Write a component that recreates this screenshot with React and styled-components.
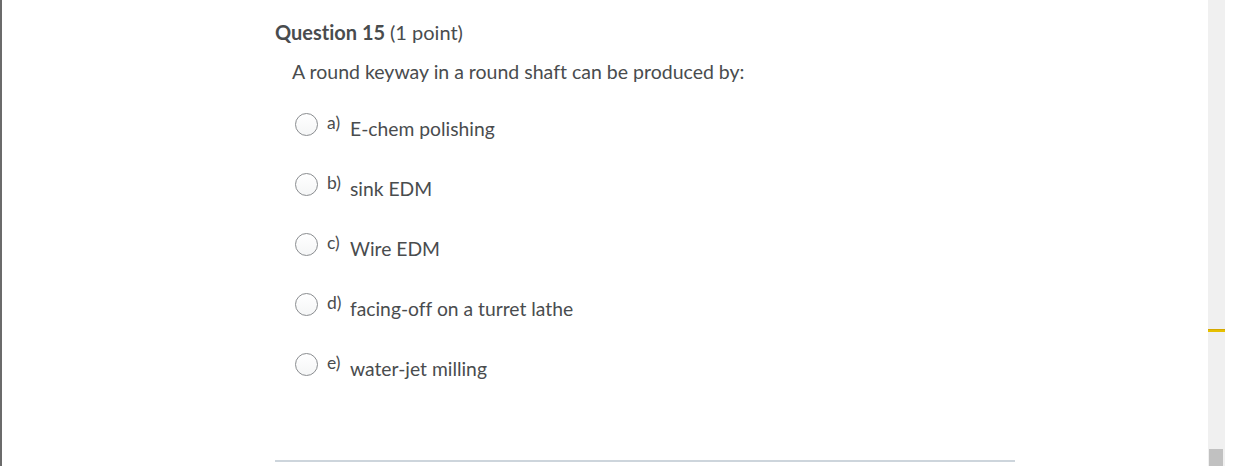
import React from 'react'
import styled, { createGlobalStyle } from 'styled-components'

const Global = createGlobalStyle`
  html, body {
    margin: 0;
    padding: 0;
    background: #fff;
    font-family: Lato, "Noto Sans", sans-serif;
    font-variant-ligatures: none;
    color: #494c4e;
  }
`

const Page = styled.div`
  display: flex;
  height: 466px;
  overflow: hidden;
`

const Main = styled.div`
  flex: 1;
  border-left: 2px solid #6b6b6b;
  padding-left: 273px;
  display: flex;
  flex-direction: column;
`

const Question = styled.div`
  width: 740px;
  flex: 1;
  display: flex;
  flex-direction: column;
  border-bottom: 2px solid #cdd5dc;
  margin-bottom: 4px;
`

const Title = styled.h2`
  margin: 20px 0 0;
  font-size: 20px;
  font-weight: 700;
  line-height: 24px;
  span {
    font-weight: 400;
  }
`

const Prompt = styled.p`
  margin: 16px 0 0 17px;
  font-size: 19.5px;
  line-height: 24px;
`

const Options = styled.ul`
  list-style: none;
  margin: 28px 0 0 20px;
  padding: 0;
  display: flex;
  flex-direction: column;
  gap: 36px;
`

const Option = styled.li`
  display: flex;
  align-items: flex-start;
  height: 24px;
`

const Radio = styled.span`
  width: 23px;
  height: 23px;
  box-sizing: border-box;
  border-radius: 50%;
  border: 1px solid #8a8d90;
  background: linear-gradient(#ffffff, #f4f5f6);
  margin-top: 1px;
  flex: none;
`

const Letter = styled.span`
  margin-left: 9px;
  font-size: 17.5px;
  line-height: 20px;
  margin-top: 1px;
  width: 23px;
`

const Text = styled.span`
  font-size: 19.3px;
  line-height: 20px;
  margin-top: 7px;
`

const Track = styled.div`
  width: 17px;
  background: #f0f0f0;
  position: relative;
  margin-right: 14px;
`

const Marker = styled.div`
  position: absolute;
  left: 0;
  right: 0;
  top: 329px;
  height: 3px;
  background: #e6c000;
  border-top: 1px solid #d4a800;
  box-sizing: border-box;
`

const Thumb = styled.div`
  position: absolute;
  left: 1px;
  right: 2px;
  top: 449px;
  bottom: 0;
  background: #c1c1c1;
`

const options = [
  ['a)', 'E-chem polishing'],
  ['b)', 'sink EDM'],
  ['c)', 'Wire EDM'],
  ['d)', 'facing-off on a turret lathe'],
  ['e)', 'water-jet milling'],
]

const App = () => {
  return (
    <>
      <Global />
      <Page>
        <Main>
          <Question>
            <Title>
              Question 15 <span>(1 point)</span>
            </Title>
            <Prompt>A round keyway in a round shaft can be produced by:</Prompt>
            <Options>
              {options.map(([l, t]) => (
                <Option key={l}>
                  <Radio />
                  <Letter>{l}</Letter>
                  <Text>{t}</Text>
                </Option>
              ))}
            </Options>
          </Question>
        </Main>
        <Track>
          <Marker />
          <Thumb />
        </Track>
      </Page>
    </>
  )
}

export default App
